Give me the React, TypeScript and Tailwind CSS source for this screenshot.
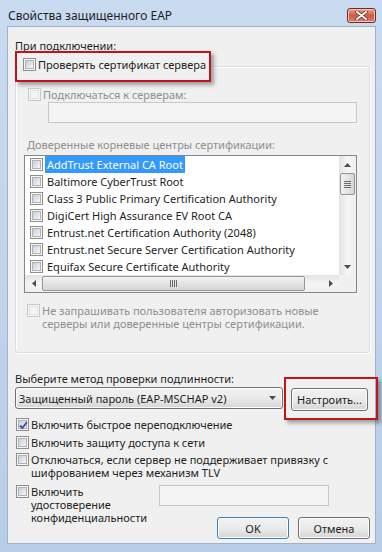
import { clsx } from 'clsx'

function CheckBox({ checked, disabled }: { checked?: boolean; disabled?: boolean }) {
  return (
    <span
      className={clsx(
        'relative flex w-[13px] h-[13px] shrink-0 items-center justify-center border',
        disabled ? 'border-[#c9c9c9] bg-[#f4f4f4]' : 'border-[#8e8f8f] bg-[#f6f6f6]'
      )}
    >
      <span
        className={clsx(
          'w-[9px] h-[9px] border',
          disabled
            ? 'border-[#e2e2e2] bg-[#f4f4f4]'
            : 'border-[#aeb3b9] bg-gradient-to-br from-[#cbcfd5] to-[#f6f6f6]'
        )}
      />
      {checked && (
        <svg className="absolute left-[1px] top-[1px]" width="11" height="11" viewBox="0 0 11 11">
          <path d="M2 5.5 L4.3 8 L9 2" fill="none" stroke="#3b54a6" strokeWidth="2" />
        </svg>
      )}
    </span>
  )
}

function Win7Button({ children, className, isDefault }: { children: React.ReactNode; className?: string; isDefault?: boolean }) {
  return (
    <div
      className={clsx(
        'flex items-center justify-center rounded-[3px] border bg-gradient-to-b from-[#f2f2f2] via-[#ebebeb] to-[#d5d5d5] shadow-[inset_0_0_0_1px_#fcfcfc]',
        isDefault ? 'border-[#3c7fb1] shadow-[inset_0_0_0_1px_#48d8fb]' : 'border-[#707070]',
        className
      )}
    >
      {children}
    </div>
  )
}

function Arrow({ dir }: { dir: 'up' | 'down' | 'left' | 'right' }) {
  const d = {
    up: 'M0 4 L3.5 0 L7 4 Z',
    down: 'M0 0 L7 0 L3.5 4 Z',
    left: 'M4 0 L4 7 L0 3.5 Z',
    right: 'M0 0 L4 3.5 L0 7 Z',
  }[dir]
  const vertical = dir === 'up' || dir === 'down'
  return (
    <svg width={vertical ? 7 : 4} height={vertical ? 4 : 7} viewBox={vertical ? '0 0 7 4' : '0 0 4 7'}>
      <path d={d} fill="#4d4d4d" />
    </svg>
  )
}

const certs = [
  'AddTrust External CA Root',
  'Baltimore CyberTrust Root',
  'Class 3 Public Primary Certification Authority',
  'DigiCert High Assurance EV Root CA',
  'Entrust.net Certification Authority (2048)',
  'Entrust.net Secure Server Certification Authority',
  'Equifax Secure Certificate Authority',
]

function CertList() {
  return (
    <div className="ml-[8px] mr-[12px] mt-[4px] h-[138px] border border-[#828790] bg-white flex flex-col">
      <div className="flex h-[119px]">
        <div className="flex-1 flex flex-col overflow-hidden">
          {certs.map((c, i) => (
            <div key={c} className="h-[17px] flex items-center pl-[5px] whitespace-nowrap">
              <CheckBox />
              <span
                className={clsx(
                  'ml-[2px] px-[2px] h-[17px] flex items-center',
                  i === 0 ? 'bg-[#3399ff] text-white' : 'text-[#1e1e1e]'
                )}
              >
                {c}
              </span>
            </div>
          ))}
        </div>
        {/* vertical scrollbar */}
        <div className="w-[17px] flex flex-col bg-gradient-to-r from-[#e3e3e3] via-[#f5f5f5] to-[#eeeeee]">
          <div className="h-[17px] flex items-center justify-center">
            <Arrow dir="up" />
          </div>
          <div className="mx-[1px] h-[22px] rounded-[2px] border border-[#979797] bg-gradient-to-r from-[#f3f3f3] to-[#d5d5d5] flex flex-col items-center justify-center gap-[1px]">
            <span className="w-[7px] h-[1px] bg-[#6b6b6b]" />
            <span className="w-[7px] h-[1px] bg-[#6b6b6b]" />
            <span className="w-[7px] h-[1px] bg-[#6b6b6b]" />
            <span className="w-[7px] h-[1px] bg-[#6b6b6b]" />
          </div>
          <div className="flex-1" />
          <div className="h-[17px] flex items-center justify-center">
            <Arrow dir="down" />
          </div>
        </div>
      </div>
      {/* horizontal scrollbar */}
      <div className="h-[17px] flex">
        <div className="flex-1 flex bg-gradient-to-b from-[#e3e3e3] via-[#f5f5f5] to-[#eeeeee]">
          <div className="w-[17px] flex items-center justify-center">
            <Arrow dir="left" />
          </div>
          <div className="my-[1px] w-[263px] rounded-[2px] border border-[#979797] bg-gradient-to-b from-[#f3f3f3] to-[#d5d5d5] flex items-center justify-center gap-[1px]">
            <span className="w-[1px] h-[7px] bg-[#6b6b6b]" />
            <span className="w-[1px] h-[7px] bg-[#6b6b6b]" />
            <span className="w-[1px] h-[7px] bg-[#6b6b6b]" />
            <span className="w-[1px] h-[7px] bg-[#6b6b6b]" />
          </div>
          <div className="flex-1" />
          <div className="w-[17px] flex items-center justify-center">
            <Arrow dir="right" />
          </div>
        </div>
        <div className="w-[17px] bg-[#f0f0f0]" />
      </div>
    </div>
  )
}

export default function App() {
  return (
    <div className="w-[382px] h-[552px] overflow-hidden flex flex-col bg-gradient-to-b from-[#c9dbf0] to-[#b7cee8] font-['Noto_Sans',sans-serif] text-[11px] leading-[13px] text-[#1e1e1e]">
      <div className="h-[26px] shrink-0 pt-[4px] pl-[8px] pr-[6px] flex items-center justify-between">
        <span className="text-[12px] text-[#1e1e1e]">Свойства защищенного EAP</span>
        <div className="w-[29px] h-[15px] rounded-[3px] border border-[#6d2b22] bg-gradient-to-b from-[#e8a493] via-[#cf5b44] to-[#d9806a] flex items-center justify-center shadow-[inset_0_0_0_1px_#f2c4b8]">
          <svg width="13" height="9" viewBox="0 0 13 9">
            <path d="M2 1 L11 8 M11 1 L2 8" stroke="#5a2a22" strokeWidth="3.4" strokeLinecap="round" />
            <path d="M2 1 L11 8 M11 1 L2 8" stroke="#ffffff" strokeWidth="2" strokeLinecap="round" />
          </svg>
        </div>
      </div>

      <div className="ml-[7px] mr-[6px] mb-[8px] flex-1 bg-[#f0f0f0] border border-[#9fb2c9] pl-[7px] flex flex-col">
        <div className="mt-[12px]">При подключении:</div>

        <div className="relative mt-[14px] w-[355px] h-[287px] shrink-0 rounded-[3px] border border-[#d5dfe5] shadow-[inset_1px_1px_0_#ffffff,1px_1px_0_#ffffff] flex flex-col">
          <div className="absolute left-[-1px] top-[-16px] w-[196px] h-[31px] border-2 border-[#c0141b] bg-[#f0f0f0] shadow-[3px_3px_4px_rgba(0,0,0,0.35)] pl-[6px] pt-[5px] flex items-start gap-[2px] whitespace-nowrap">
            <CheckBox />
            <span>Проверять сертификат сервера</span>
          </div>

          <div className="mt-[21px] ml-[12px] flex items-start gap-[2px] text-[#8f8f8f]">
            <CheckBox disabled />
            <span>Подключаться к серверам:</span>
          </div>
          <div className="mt-[1px] ml-[32px] mr-[12px] h-[21px] border border-[#c6c9cc] bg-[#f4f4f4]" />

          <div className="mt-[15px] ml-[11px] text-[#8f8f8f]">Доверенные корневые центры сертификации:</div>

          <CertList />

          <div className="mt-[11px] ml-[11px] flex items-start gap-[2px] text-[#8f8f8f]">
            <CheckBox disabled />
            <span>
              Не запрашивать пользователя авторизовать новые
              <br />
              серверы или доверенные центры сертификации.
            </span>
          </div>
        </div>

        <div className="mt-[19px]">Выберите метод проверки подлинности:</div>

        <div className="relative mt-[2px] flex items-start">
          <Win7Button className="w-[268px] h-[22px] !justify-between pl-[3px] pr-[6px]">
            <span>Защищенный пароль (EAP-MSCHAP v2)</span>
            <Arrow dir="down" />
          </Win7Button>
          <Win7Button className="ml-[8px] mt-[1px] w-[77px] h-[23px]">Настроить...</Win7Button>
          <div className="absolute left-[269px] top-[-10px] w-[94px] h-[43px] border-2 border-[#c0141b] shadow-[3px_3px_4px_rgba(0,0,0,0.35)]" />
        </div>

        <div className="mt-[7px] ml-[1px] flex items-start gap-[2px]">
          <CheckBox checked />
          <span>Включить быстрое переподключение</span>
        </div>
        <div className="mt-[5px] ml-[1px] flex items-start gap-[2px]">
          <CheckBox />
          <span>Включить защиту доступа к сети</span>
        </div>
        <div className="mt-[4px] ml-[1px] flex items-start gap-[2px]">
          <CheckBox />
          <span>
            Отключаться, если сервер не поддерживает привязку с
            <br />
            шифрованием через механизм TLV
          </span>
        </div>

        <div className="mt-[6px] flex items-start">
          <div className="w-[143px] ml-[1px] flex items-start gap-[2px]">
            <CheckBox />
            <span>
              Включить
              <br />
              удостоверение
              <br />
              конфиденциальности
            </span>
          </div>
          <div className="flex flex-col">
            <div className="w-[170px] h-[21px] border border-[#c6c9cc] bg-[#f4f4f4]" />
            <div className="mt-[11px] ml-[58px] flex gap-[9px]">
              <Win7Button isDefault className="w-[72px] h-[22px]">OK</Win7Button>
              <Win7Button className="w-[72px] h-[22px]">Отмена</Win7Button>
            </div>
          </div>
        </div>
      </div>
    </div>
  )
}
